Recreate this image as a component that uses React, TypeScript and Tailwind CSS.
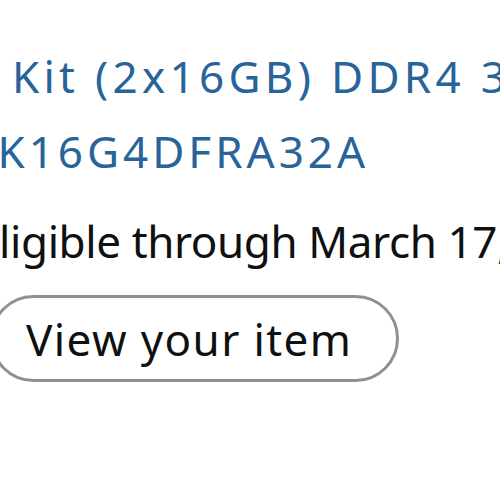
export default function App() {
  return (
    <div className="w-[500px] h-[500px] overflow-hidden bg-white font-['Noto_Sans',sans-serif]">
      <div className="flex flex-col pt-[39px]">
        <div className="ml-[-132px] whitespace-nowrap text-[44px] leading-[75px] tracking-[4.3px] text-[#28639a]">
          32GB Kit (2x16GB) DDR4 3200MHz CL22
        </div>
        <div className="ml-[-92px] whitespace-nowrap text-[44px] leading-[75px] tracking-[4px] text-[#28639a]">
          CT2K16G4DFRA32A
        </div>
        <div className="ml-[-25px] mt-[15px] whitespace-nowrap text-[44px] leading-[75px] tracking-[-0.4px] text-[#0f1111]">
          Eligible through March 17, 2023
        </div>
        <div className="ml-[-10px] mt-[16px]">
          <button className="h-[87px] rounded-full border-[3px] border-[#8d9096] bg-white pl-[33px] pr-[44px] text-[44px] tracking-[1.4px] text-[#0f1111] whitespace-nowrap">
            View your item
          </button>
        </div>
      </div>
    </div>
  );
}
